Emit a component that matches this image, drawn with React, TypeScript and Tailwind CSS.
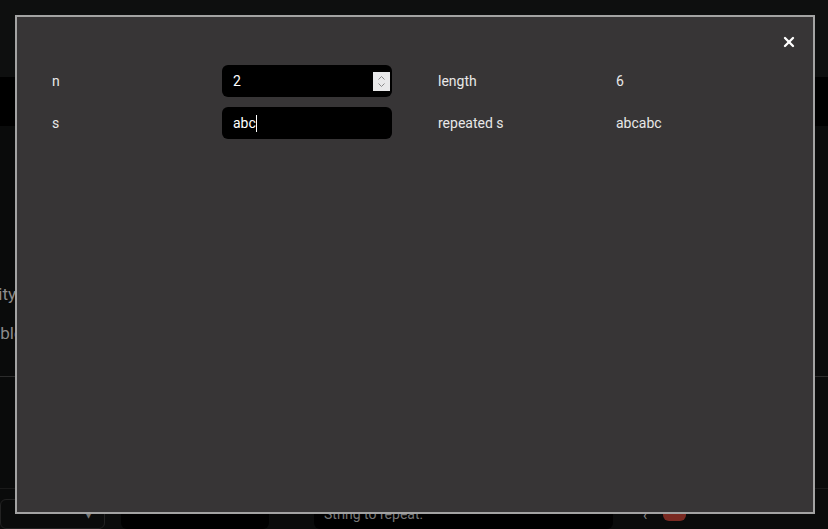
import { X } from 'lucide-react';

const font = { fontFamily: 'Roboto, "Liberation Sans", sans-serif' };

function Spinner() {
  return (
    <div className="flex h-[19px] w-[17px] flex-col items-center justify-center bg-[#e9e9ea]">
      <svg width="9" height="15" viewBox="0 0 9 15" fill="none" stroke="#8a8a8a" strokeWidth="1">
        <path d="M1.5 5.5 L4.5 2.5 L7.5 5.5" />
        <path d="M1.5 9.5 L4.5 12.5 L7.5 9.5" />
      </svg>
    </div>
  );
}

export default function App() {
  return (
    <div className="relative h-[529px] w-[828px] overflow-hidden bg-[#0a0b0b]" style={font}>
      {/* Page behind the dialog */}
      <div className="flex h-full flex-col">
        <div className="h-[77px] bg-[#0e0f0f]" />
        <div className="h-[50px] bg-black" />
        <div className="flex h-[250px] flex-col justify-end gap-[14px] pb-[29px] text-[17px] text-[#8c8c8c]">
          <div className="flex w-[16px] justify-end whitespace-nowrap">Stability</div>
          <div className="flex w-[23px] justify-end whitespace-nowrap">Enable</div>
        </div>
        <div className="h-px bg-[#2c2c2c]" />
        <div className="h-[112px]" />
        <div className="h-px bg-[#1a1a1a]" />
        <div className="flex flex-1 items-start gap-4 pt-[10px] text-[14px]">
          <div className="flex h-[30px] w-[105px] items-center justify-end rounded-md border border-[#222] pr-3 text-[#777]">▾</div>
          <div className="h-[30px] w-[148px] rounded-md bg-black" />
          <div className="ml-[29px] flex h-[30px] w-[299px] items-center rounded-md bg-black pl-[10px] text-[#777]">String to repeat:</div>
          <div className="ml-[14px] mt-[6px] text-[#888]">‹</div>
          <div className="h-[22px] w-[23px] rounded-md bg-[#7a2a22]" />
        </div>
      </div>

      {/* Dialog */}
      <div className="absolute left-[15px] top-[15px] h-[499px] w-[800px] border-2 border-[#a3a3a3] bg-[#373536]">
        <div className="flex justify-end pr-[16px] pt-[17px]">
          <X className="h-[16px] w-[16px] text-white" strokeWidth={3.5} />
        </div>
        <div className="mt-[15px] flex flex-col gap-[10px] pl-[35px] text-[14px] text-[#e8e8e8]">
          <div className="flex h-[32px] items-center">
            <div className="w-[170px]">n</div>
            <div className="flex h-[32px] w-[170px] items-center justify-between rounded-md bg-black pl-[11px] pr-[2px] text-white">
              <span>2</span>
              <Spinner />
            </div>
            <div className="ml-[46px] w-[178px]">length</div>
            <div>6</div>
          </div>
          <div className="flex h-[32px] items-center">
            <div className="w-[170px]">s</div>
            <div className="flex h-[32px] w-[170px] items-center rounded-md bg-black pl-[11px] text-white">
              <span>abc</span>
              <span className="h-[17px] w-px bg-white" />
            </div>
            <div className="ml-[46px] w-[178px]">repeated s</div>
            <div>abcabc</div>
          </div>
        </div>
      </div>
    </div>
  );
}
